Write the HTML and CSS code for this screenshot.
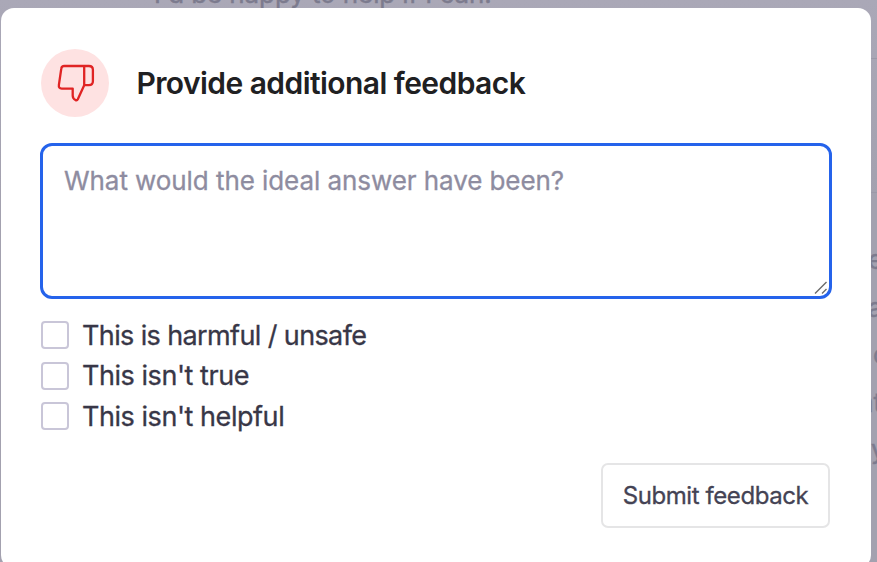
FILE: index.html
```
<!DOCTYPE html>
<html lang="en">
<head>
<meta charset="utf-8">
<title>Feedback</title>
<link rel="stylesheet" href="styles.css">
</head>
<body>
<div class="page">
  <p class="message">I'd be happy to help if I can!</p>
  <aside class="side">
    <div class="side-head"></div>
    <p>e</p><p>a</p><p class="shift">c</p><p class="pull">at</p><p class="pull-y">y</p>
  </aside>
</div>
<form class="dialog">
  <header class="head">
    <span class="badge">
      <svg width="68" height="68" viewBox="41.3 49 68 68" fill="none" stroke="#e02424" stroke-width="2.3" stroke-linejoin="round" stroke-linecap="round">
        <path d="M84.5 66H64.6Q61.9 66 61.6 68.5L59.2 84.8Q58.7 88.6 62 88.6H73V95.5Q73 98.6 75.8 100.1Q77.4 100.7 78.1 99.3L84.5 85.2ZM84.5 66H89.2Q93.2 66 93.2 69.8V81.3Q93.2 85.2 89.2 85.2H84.5"/>
      </svg>
    </span>
    <h1>Provide additional feedback</h1>
  </header>
  <div class="field">
    <span class="placeholder">What would the ideal answer have been?</span>
    <svg class="grip" width="14" height="14" viewBox="0 0 14 14" fill="none" stroke="#6b6b6b" stroke-width="1.4"><path d="M1 12.5L12.5 1M8 12.5L12.5 8"/></svg>
  </div>
  <div class="options">
    <label><input type="checkbox"><span class="harmful">This is harmful / unsafe</span></label>
    <label><input type="checkbox"><span>This isn't true</span></label>
    <label><input type="checkbox"><span>This isn't helpful</span></label>
  </div>
  <footer><button type="button">Submit feedback</button></footer>
</form>
</body>
</html>
```
FILE: styles.css
```
* { box-sizing: border-box; }
body {
  margin: 0;
  height: 562px;
  overflow: hidden;
  position: relative;
  font-family: Inter, "Liberation Sans", sans-serif;
  background: linear-gradient(#aaa8b7, #a3a1af 200px);
}
p, h1 { margin: 0; }
.page {
  display: flex;
  justify-content: space-between;
  height: 562px;
  color: #7c7b8e;
  font-size: 26px;
  -webkit-text-stroke: 0.4px;
}
.message {
  margin: -22px 0 0 154px;
  line-height: 32px;
  letter-spacing: -0.1px;
  white-space: nowrap;
}
.side { width: 9px; overflow: hidden; }
.side-head {
  height: 135px;
  margin: 58px 0 43px;
  border-top: 1px solid #9b99a8;
  border-bottom: 1px solid #9b99a8;
}
.side p { line-height: 47.5px; white-space: nowrap; }
.side .shift { margin-left: 5px; }
.side .pull { margin-left: -9px; }
.side .pull-y { margin-left: 3px; }
.dialog {
  position: absolute;
  left: 1px;
  top: 8px;
  width: 870px;
  height: 560px;
  padding: 41px 41px 0 40px;
  border-radius: 13px;
  background: #fff;
}
.head { display: flex; align-items: center; height: 68px; gap: 27px; }
.badge {
  width: 68px;
  height: 68px;
  margin-left: 0.4px;
  border-radius: 50%;
  background: #fee2e2;
}
.badge svg { display: block; }
h1 {
  font-size: 30px;
  font-weight: 600;
  letter-spacing: -0.56px;
  color: #202022;
  white-space: nowrap;
}
.field {
  position: relative;
  width: 792px;
  height: 156px;
  margin: 26px 0 0 -1px;
  padding: 18px 21px;
  border: 3px solid #2563eb;
  border-radius: 12px;
}
.placeholder {
  display: block;
  font-size: 26px;
  line-height: 34px;
  letter-spacing: -0.07px;
  color: #8e8ca0;
  -webkit-text-stroke: 0.3px;
  white-space: nowrap;
}
.grip { position: absolute; right: 1px; bottom: 1px; }
.options { margin-top: 16px; }
label {
  display: flex;
  align-items: center;
  height: 40.6px;
  gap: 13px;
  font-size: 27px;
  letter-spacing: -0.45px;
  color: #383747;
  -webkit-text-stroke: 0.3px;
  white-space: nowrap;
}
.harmful { letter-spacing: -0.62px; }
input {
  appearance: none;
  flex: none;
  width: 28px;
  height: 28px;
  margin: 0;
  border: 2px solid #c9c6d8;
  border-radius: 4px;
  background: #fff;
}
footer { display: flex; justify-content: flex-end; margin-top: 26.5px; }
button {
  width: 229px;
  height: 65px;
  padding: 0;
  border: 2px solid #e5e5e6;
  border-radius: 7px;
  background: #fff;
  color: #444354;
  font: 24px Inter, "Liberation Sans", sans-serif;
  letter-spacing: -0.42px;
  -webkit-text-stroke: 0.3px;
  white-space: nowrap;
}
```
